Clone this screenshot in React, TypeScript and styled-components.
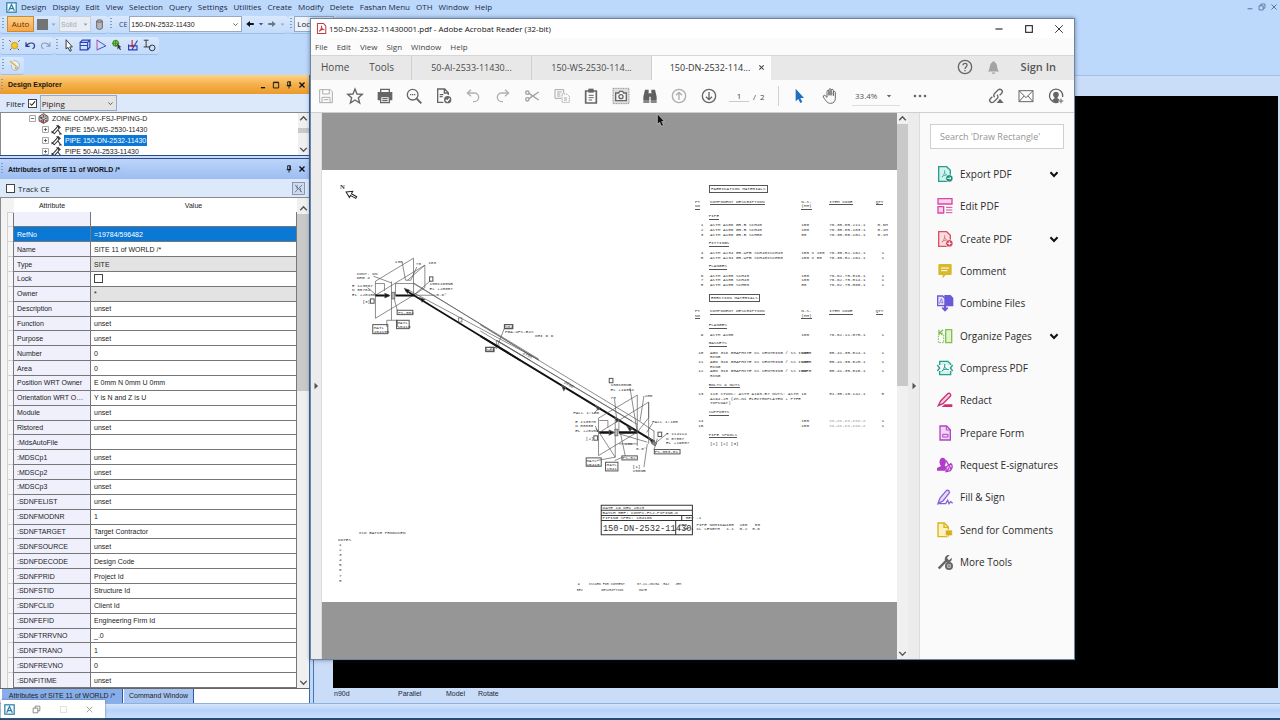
import React from "react";
import styled, { createGlobalStyle, css } from "styled-components";

const ui = `"Open Sans", "Noto Sans", sans-serif`;
const sans = `"Liberation Sans", Arial, sans-serif`;
const mono = `"Liberation Mono", "Courier New", monospace`;

const GlobalStyle = createGlobalStyle`
  * { box-sizing: border-box; }
  html, body, #root { height: 100%; margin: 0; }
  body { overflow: hidden; font-family: ${sans}; font-size: 7px; color: #222; }
  button, input, select { font: inherit; color: inherit; margin: 0; padding: 0; border: 0; background: none; border-radius: 0; }
  svg { display: block; flex: none; }
  ul { margin: 0; padding: 0; list-style: none; }
`;

/* ---------- Host application frame ---------- */

const Desktop = styled.div`
  position: relative;
  display: flex;
  flex-direction: column;
  height: 100vh;
  overflow: hidden;
  background: #bcd8fb;
`;

const MenuBar = styled.nav`
  display: flex;
  align-items: center;
  gap: 4px;
  height: 14px;
  padding-left: 6px;
  font-family: ${ui};
  font-size: 8px;
  color: #1d2b45;
`;

const MenuItems = styled.div<{ $gap: number }>`
  display: flex;
  flex: 1;
  gap: ${(p) => p.$gap}px;
`;

const MenuItem = styled.button`
  white-space: nowrap;
  line-height: 12px;
`;

const FrameButtons = styled.div`
  display: flex;
  gap: 4px;
  padding-right: 2px;
  color: #4b6591;
`;

const ToolRow = styled.div<{ $height: number }>`
  display: flex;
  align-items: center;
  height: ${(p) => p.$height}px;
`;

const Strip = styled.div<{ $gap: number }>`
  display: flex;
  align-items: center;
  gap: ${(p) => p.$gap}px;
  height: 18px;
  padding: 0 3px 0 2px;
  border-radius: 3px;
  border-bottom: 1px solid #9dbfea;
  background: linear-gradient(#d9e8fc, #c3dbfb);
`;

const Grip = styled.span`
  width: 2px;
  height: 12px;
  background: repeating-linear-gradient(#7c9cc9 0 1px, transparent 1px 3px);
`;

const IconButton = styled.button`
  display: grid;
  place-items: center;
`;

const AutoButton = styled.button`
  width: 27px;
  height: 16px;
  border: 1px solid #c98b34;
  background: linear-gradient(#fdd08a, #fba545);
  font-family: ${ui};
  font-size: 8px;
  line-height: 14px;
  color: #5a3606;
`;

const Swatch = styled.button`
  width: 11px;
  height: 11px;
  background: #747474;
`;

const SelectBox = styled.div<{ $width: number; $muted?: boolean; $tone?: string }>`
  display: flex;
  align-items: center;
  width: ${(p) => p.$width}px;
  height: 16px;
  padding: 0 2px 0 1px;
  border: 1px solid ${(p) => (p.$muted ? "#c7cfda" : "#98a9c2")};
  background: ${(p) => p.$tone ?? "#fff"};
  color: ${(p) => (p.$muted ? "#a8a8a8" : "#222")};
  select { flex: 1; min-width: 0; appearance: none; outline: 0; }
`;

const CeLabel = styled.label`
  padding-left: 5px;
  font-family: ${ui};
  font-size: 7px;
  color: #2c4270;
`;

const LocButton = styled.button`
  width: 40px;
  height: 16px;
  padding-left: 2px;
  border: 1px solid #98a9c2;
  background: #eef4fd;
  text-align: left;
  font-family: ${ui};
  font-size: 8px;
  line-height: 14px;
`;

const Workspace = styled.div`
  display: flex;
  flex: 1;
  min-height: 0;
`;

const Dock = styled.aside`
  display: flex;
  flex-direction: column;
  width: 310px;
  flex: none;
  border-right: 1px solid #45669c;
  background: #dbe9fb;
`;

const PaneHeader = styled.header<{ $active?: boolean }>`
  display: flex;
  align-items: center;
  gap: 5px;
  height: ${(p) => (p.$active ? 19 : 20)}px;
  flex: none;
  padding: 0 3px 0 1px;
  background: ${(p) =>
    p.$active ? "linear-gradient(#fdd386, #f5b04a 50%, #eb9a2a)" : "linear-gradient(#bdd5fa, #9cbdf1)"};
  h2 { flex: 1; margin: 0; font-size: 7px; font-weight: 700; color: #151515; }
`;

const PaneRow = styled.div`
  display: flex;
  align-items: center;
  gap: 3px;
  height: 18px;
  flex: none;
  padding: 0 4px 0 6px;
  font-family: ${ui};
  font-size: 8px;
`;

const Check = styled.input`
  appearance: none;
  width: 9px;
  height: 9px;
  border: 1px solid #444;
  background: #fff;
`;

const CheckMark = styled.span`
  display: grid;
  place-items: center;
  > * { grid-area: 1 / 1; }
  svg { pointer-events: none; visibility: hidden; }
  input:checked + svg { visibility: visible; }
`;

const Spacer = styled.span<{ $height?: number }>`
  flex: ${(p) => (p.$height ? `0 0 ${p.$height}px` : "1")};
`;

const TreePane = styled.div`
  display: flex;
  height: 43px;
  flex: none;
  overflow: hidden;
  border-top: 1px solid #8b8b8b;
  border-left: 1px solid #8b8b8b;
  background: #fff;
`;

const Tree = styled.ul`
  flex: 1;
  min-width: 0;
`;

const TreeNode = styled.li<{ $depth: number; $selected?: boolean }>`
  display: flex;
  align-items: center;
  gap: 2px;
  height: 11px;
  padding-left: ${(p) => 15 + p.$depth * 13}px;
  white-space: nowrap;
  span { padding: 0 1px; line-height: 11px; ${(p) => p.$selected && css`background: #0c78d6; color: #fff;`} }
`;

const ScrollTrack = styled.div<{ $width: number }>`
  display: flex;
  flex-direction: column;
  align-items: center;
  width: ${(p) => p.$width}px;
  flex: none;
  background: #f0f0f0;
  color: #444;
`;

const Thumb = styled.div<{ $size: number }>`
  width: 100%;
  height: ${(p) => p.$size}px;
  flex: none;
  background: #c9c9c9;
`;

const DockDivider = styled.div`
  height: 4px;
  flex: none;
  border-top: 1px solid #2c4a8c;
  border-bottom: 1px solid #2c4a8c;
  background: #c8dcf8;
`;

const GridPane = styled.div`
  display: flex;
  flex: 1;
  min-height: 0;
  overflow: hidden;
  padding-left: 6px;
  border-top: 1px solid #8b8b8b;
  border-left: 1px solid #8b8b8b;
  background: #f3f3f3;
`;

const AttributeTable = styled.table`
  flex: 1;
  width: 0;
  height: 100%;
  border-collapse: collapse;
  table-layout: fixed;
  font-size: 7px;
  line-height: 9px;
  tr { height: 14px; }
  th, td { padding: 0 3px; text-align: left; font-weight: 400; white-space: nowrap; overflow: hidden; }
  thead th { background: #fff; text-align: center; }
  thead th:first-child { background: #f3f3f3; }
`;

const AttributeRow = styled.tr<{ $state?: "selected" | "readonly" | "blank" }>`
  td:first-child { padding: 0; border-top: 1px solid #d2d2d2; border-left: 1px solid #d2d2d2; background: #f6f6f6; }
  && th, && th + td { border: 1px solid #777; }
  && th { background: #f0f0fd; text-overflow: ellipsis; }
  && th + td { background: ${(p) => (p.$state === "readonly" ? "#e3e3e3" : "#fff")}; }
  && th, && th + td {
    ${(p) => p.$state === "blank" && css`border-top: 0;`}
    ${(p) => p.$state === "selected" && css`background: #0c78d6; color: #fff;`}
  }
  input { display: block; }
`;

const DockTabs = styled.div`
  display: flex;
  gap: 1px;
  height: 15px;
  flex: none;
  padding-left: 2px;
  border-top: 1px solid #666;
  background: #fff;
`;

const DockTab = styled.button<{ $active?: boolean }>`
  padding: 0 5px;
  min-width: ${(p) => (p.$active ? 121 : 70)}px;
  border-right: 1px solid #2f57a8;
  background: ${(p) => (p.$active ? "#86aeea" : "#a9c6f3")};
  line-height: 12px;
`;

const ViewFrame = styled.main`
  display: flex;
  flex: 1;
  flex-direction: column;
  min-width: 0;
  margin-left: 3px;
  padding: 20px 2px 0 19px;
  border-left: 1px solid #4f73ad;
  border-top: 1px solid #a3bfe6;
  background: #c9dcf8;
`;

const Canvas3D = styled.div`
  flex: 1;
  background: #000;
`;

const ViewStatus = styled.div`
  display: grid;
  grid-template-columns: 64px 48px 32px 1fr;
  align-items: start;
  height: 15px;
  padding: 1px;
  flex: none;
  line-height: 9px;
  color: #1f2937;
`;

const StatusBar = styled.footer`
  height: 17px;
  flex: none;
  border-top: 1px solid #8fb0df;
  border-bottom: 2px solid #27496f;
  background: linear-gradient(#d4e5fc, #b7d2f8 45%, #c9defb);
`;

const MinimizedWindow = styled.div`
  position: absolute;
  left: 1px;
  bottom: 2px;
  display: flex;
  align-items: center;
  justify-content: space-between;
  width: 104px;
  height: 18px;
  padding: 0 11px 0 3px;
  background: #fff;
  box-shadow: 0 0 2px #5b6f8c;
  color: #777;
`;

/* ---------- PDF reader window ---------- */

const ReaderWindow = styled.section`
  position: absolute;
  left: 310px;
  right: 205px;
  top: 18px;
  bottom: 60px;
  display: flex;
  flex-direction: column;
  border: 1px solid #6d84a3;
  background: #fff;
  font-family: ${ui};
  box-shadow: 0 0 4px rgba(20, 40, 80, 0.5);
`;

const TitleBar = styled.header`
  display: flex;
  align-items: center;
  gap: 2px;
  height: 19px;
  flex: none;
  padding: 0 9px 0 5px;
  color: #111;
  h1 { flex: 1; margin: 0; font-size: 8px; font-weight: 400; }
`;

const CaptionButtons = styled.div`
  display: flex;
  gap: 18px;
  color: #222;
`;

const ReaderMenu = styled.nav`
  display: flex;
  align-items: center;
  height: 17px;
  flex: none;
  padding-left: 4px;
  background: #fbfbfb;
  font-size: 8px;
  color: #444;
`;

const TabBar = styled.div`
  display: flex;
  height: 25px;
  flex: none;
  border-top: 1px solid #d6d6d6;
  background: #e8e8e8;
  color: #4a4a4a;
`;

const HomeTabs = styled.div`
  display: flex;
  width: 100px;
  gap: 20px;
  padding: 0 0 2px 10px;
  font-size: 10px;
`;

const FileTab = styled.button<{ $active?: boolean }>`
  display: flex;
  align-items: center;
  justify-content: center;
  gap: ${(p) => (p.$active ? 8 : 0)}px;
  width: 120px;
  padding: 0 0 2px ${(p) => (p.$active ? 12 : 0)}px;
  border-left: 1px solid #cfcfcf;
  background: ${(p) => (p.$active ? "#fcfcfc" : "#e8e8e8")};
  font-size: 9px;
  color: ${(p) => (p.$active ? "#333" : "#4a4a4a")};
`;

const Account = styled.div`
  display: flex;
  align-items: center;
  gap: 11px;
  margin-left: auto;
  padding: 0 18px 2px 0;
  button:last-child { padding-left: 8px; font-size: 11px; font-weight: 600; line-height: 16px; color: #555; }
`;

const Toolbar = styled.div`
  display: flex;
  align-items: center;
  height: 33px;
  flex: none;
  padding: 0 6px 0 3px;
  border-bottom: 1px solid #cfcfcf;
  background: #fbfbfb;
`;

const ToolGroup = styled.div<{ $width: number }>`
  display: flex;
  justify-content: space-between;
  width: ${(p) => p.$width}px;
`;

const ToolButton = styled.button`
  display: grid;
  place-items: center;
  width: 24px;
  height: 24px;
`;

const PageField = styled.label`
  display: flex;
  align-items: center;
  gap: 4px;
  width: 50px;
  height: 20px;
  margin-left: 8px;
  border-right: 1px solid #d2d2d2;
  font-size: 8px;
  color: #444;
  white-space: nowrap;
  input { width: 20px; border-bottom: 1px solid #ccc; text-align: center; outline: 0; }
`;

const ZoomField = styled.label`
  display: flex;
  align-items: center;
  width: 48px;
  height: 20px;
  margin: 0 8px 0 10px;
  padding: 0 8px 0 3px;
  border-bottom: 1px solid #ddd;
  font-size: 8px;
  color: #555;
  select { flex: 1; min-width: 0; appearance: none; outline: 0; }
`;

const ReaderBody = styled.div`
  display: flex;
  flex: 1;
  min-height: 0;
`;

const Flap = styled.button<{ $width: number }>`
  display: grid;
  place-items: center;
  width: ${(p) => p.$width}px;
  flex: none;
  border-right: 1px solid #dcdcdc;
  background: #ececec;
`;

const PageView = styled.div`
  display: flex;
  flex: 1;
  min-width: 0;
  overflow: hidden;
  align-items: center;
  justify-content: center;
  background: #969696;
`;

const ToolPanel = styled.aside`
  width: 154px;
  flex: none;
  padding: 11px 10px 0;
  background: #fafafa;
  overflow: hidden;
`;

const SearchInput = styled.input`
  display: block;
  width: 100%;
  height: 25px;
  margin-bottom: 16px;
  padding: 0 9px;
  border: 1px solid #cfcfcf;
  background: #fff;
  font-size: 9px;
  outline: 0;
  &::placeholder { color: #959595; opacity: 1; }
`;

const ToolList = styled.ul`
  display: flex;
  flex-direction: column;
  justify-content: space-between;
  height: 406px;
  margin-right: -3px;
`;

const ToolLink = styled.button`
  display: flex;
  align-items: center;
  gap: 6px;
  width: 100%;
  height: 18px;
  padding: 0 7px 0 6px;
  font-size: 10px;
  color: #2b2b2b;
  white-space: nowrap;
`;

const Pointer = styled.div`
  position: absolute;
  left: 655px;
  top: 113px;
`;

/* ---------- Drawing sheet, sized in page units and shown at the reader's zoom ---------- */

const Sheet = styled.article`
  zoom: 0.334;
  flex: none;
  width: 1724px;
  height: 1293px;
  background: #fff;
  font-family: ${mono};
  font-size: 13px;
  color: #333;
  text { font-family: ${mono}; font-size: 13px; fill: #333; }
`;

const SheetTop = styled.div`
  display: flex;
  height: 960px;
`;

const Materials = styled.div`
  flex: 1;
  padding: 45px 0 0 5px;
`;

const MaterialTitle = styled.h3`
  width: max-content;
  height: 24px;
  margin: 0 0 20px 50px;
  padding: 0 4px;
  border: 3px solid #555;
  font-size: 13px;
  font-weight: 400;
  line-height: 18px;
`;

const MaterialTable = styled.table`
  width: 592px;
  margin-bottom: 20px;
  border-collapse: collapse;
  table-layout: fixed;
  line-height: 14px;
  th, td { padding: 0; font-weight: 400; text-align: left; vertical-align: top; white-space: nowrap; }
  th span { border-bottom: 3px solid #555; display: inline-block; }
  thead tr { height: 28px; }
  td:first-child { padding-right: 20px; text-align: right; }
  thead th:first-child { padding-left: 9px; }
  td:nth-child(5) { text-align: center; }
`;

const GroupRow = styled.tr`
  height: 40px;
  && th { vertical-align: middle; padding-left: 50px; }
`;

/* ---------- Icons ---------- */

type IconProps = { size?: number; color?: string; fill?: string; weight?: number; children: React.ReactNode };

const Icon = ({ size = 18, color = "#666", fill = "none", weight = 3, children }: IconProps) => (
  <svg width={size} height={size} viewBox="-27 -27 54 54" fill={fill} stroke={color} strokeWidth={weight} aria-hidden="true">
    {children}
  </svg>
);

const Chevron = ({ size = 8, up, color = "#555", weight = 7 }: { size?: number; up?: boolean; color?: string; weight?: number }) => (
  <Icon size={size} color={color} weight={weight}>
    <path d={up ? "M-16 9L0 -8L16 9" : "M-16 -8L0 9L16 -8"} />
  </Icon>
);

const Caret = ({ size = 6, color = "#666" }: { size?: number; color?: string }) => (
  <Icon size={size} color="none" fill={color}>
    <path d="M-20 -10H20L0 14Z" />
  </Icon>
);

const CloseX = ({ size = 8, weight = 9, color = "#111" }: { size?: number; weight?: number; color?: string }) => (
  <Icon size={size} color={color} weight={weight}>
    <path d="M-17 -17L17 17M17 -17L-17 17" />
  </Icon>
);

const Pin = () => (
  <Icon size={8} color="#111" weight={6}>
    <path d="M-9 -22H9V4H-9ZM-16 5H16M0 5V24M6 -22V4" />
  </Icon>
);

const AppMark = ({ size = 11 }: { size?: number }) => (
  <Icon size={size} color="#2c7fa3" fill="#f4fbff" weight={6}>
    <rect x="-23" y="-23" width="46" height="46" />
    <path d="M-14 16L0 -15L14 16M-8 5H9" fill="none" />
  </Icon>
);

const docShape = "M-19 -22H5L16 -11V22H-19Z";
const pdfMark = "M-10 10C-3 4 0 -4 -1 -12M-1 -5C1 2 6 5 11 5M-9 9C-4 3 4 3 11 5";

const ToolPictures: Record<string, React.ReactNode> = {
  save: (
    <Icon color="#adadad">
      <path d="M-19 -19H13L19 -13V20H-19ZM-10 -19V-6H10V-19M-12 20V4H12V20M-7 11H7" />
    </Icon>
  ),
  star: (
    <Icon weight={4}>
      <path d="M0 -21L6 -6L22 -5L10 5L14 21L0 12L-14 21L-10 5L-22 -5L-6 -6Z" />
    </Icon>
  ),
  print: (
    <Icon weight={4}>
      <path d="M-13 -11V-20H13V-11" />
      <path d="M-20 -10H20V11H-20Z" fill="#666" />
      <path d="M-13 2H13V20H-13ZM-8 8H8M-8 14H8" fill="#fff" />
    </Icon>
  ),
  zoomOut: (
    <Icon weight={4}>
      <circle cx="-4" cy="-4" r="16" />
      <path d="M8 8L22 22" strokeWidth="6" />
      <path d="M-12 -4H5" strokeWidth="4" strokeDasharray="4 2" />
    </Icon>
  ),
  fileCheck: (
    <Icon weight={4}>
      <path d="M-2 19H-19V-21H2L13 -10V-3M1 -20V-9H13M-13 -4H-2M-13 2H-4" />
      <circle cx="11" cy="11" r="11" fill="#666" stroke="none" />
      <path d="M5 11L10 16L17 7" stroke="#fff" />
    </Icon>
  ),
  undo: (
    <Icon color="#b0b0b0" weight={4}>
      <path d="M-6 -19L-17 -9L-6 1M-17 -9H4A13 13 0 0 1 4 17H0" />
    </Icon>
  ),
  redo: (
    <Icon color="#b0b0b0" weight={4}>
      <path d="M6 -19L17 -9L6 1M17 -9H-4A13 13 0 0 0 -4 17H0" />
    </Icon>
  ),
  cut: (
    <Icon color="#a0a0a0" weight={4}>
      <circle cx="-14" cy="-10" r="5" />
      <circle cx="-14" cy="10" r="5" />
      <path d="M-9 -8L20 12M-9 8L20 -12" />
    </Icon>
  ),
  copy: (
    <Icon color="#a8a8a8" weight={3}>
      <path d="M-2 7H-21V-19H5V-8M-15 -12H-1M-15 -6H-5M-15 0H-5" />
      <path d="M0 -6H15L22 1V19H0Z" strokeDasharray="4 2" />
      <path d="M6 6H15M6 12H15" />
    </Icon>
  ),
  paste: (
    <Icon weight={5}>
      <path d="M-16 -15H16V21H-16Z" />
      <path d="M-8 -22H8V-10H-8Z" fill="#666" stroke="none" />
      <path d="M-7 -2H8M-7 5H8M-7 12H3" strokeWidth="3" />
    </Icon>
  ),
  snapshot: (
    <Icon weight={4}>
      <rect x="-24" y="-23" width="48" height="46" fill="#dedede" strokeWidth="2" strokeDasharray="3 2" />
      <path d="M-16 -9H-7L-4 -14H5L8 -9H16V14H-16Z" fill="#f6f6f6" />
      <circle cx="0" cy="2" r="6" />
    </Icon>
  ),
  find: (
    <Icon color="none" fill="#606060">
      <path d="M-15 -19H-4V-7H-2V14H-20V2ZM15 -19H4V-7H2V14H20V2Z" />
      <path d="M-20 16H-2V20H-20ZM2 16H20V20H2ZM-3 -8H3V2H-3Z" />
    </Icon>
  ),
  pageUp: (
    <Icon color="#adadad" weight={4}>
      <circle r="20" />
      <path d="M0 12V-11M-9 -2L0 -11L9 -2" />
    </Icon>
  ),
  pageDown: (
    <Icon weight={4}>
      <circle r="20" />
      <path d="M0 -12V11M-9 2L0 11L9 2" />
    </Icon>
  ),
  select: (
    <Icon color="none" fill="#1f6fc0">
      <path d="M-10 -22V16L-2 9L4 21L10 18L4 6H15Z" />
    </Icon>
  ),
  hand: (
    <Icon>
      <path d="M-9 4V-14C-9 -18 -3 -18 -3 -14V-2V-19C-3 -23 3 -23 3 -19V-2V-17C3 -21 10 -21 10 -17V-1V-11C10 -15 16 -15 16 -11V7C16 16 10 22 2 22C-8 22 -11 16 -20 3C-22 -2 -16 -4 -13 0L-9 4Z" />
    </Icon>
  ),
  more: (
    <Icon color="none" fill="#666">
      <circle cx="-15" r="4" />
      <circle r="4" />
      <circle cx="15" r="4" />
    </Icon>
  ),
  link: (
    <Icon weight={4}>
      <path d="M-4 4C-9 -1 -6 -6 -3 -9L6 -18C14 -24 23 -15 17 -8L11 -2M3 -4C8 1 6 6 2 9L-7 18C-15 23 -23 15 -17 8L-11 2" />
      <path d="M2 21L12 8L23 21Z" fill="#666" stroke="none" />
    </Icon>
  ),
  mail: (
    <Icon>
      <path d="M-21 -16H21V17H-21ZM-21 -16L0 5L21 -16M-21 17L-6 0M21 17L6 0" />
    </Icon>
  ),
  addUser: (
    <Icon weight={4}>
      <path d="M8 18A20 20 0 1 1 20 3" />
      <path d="M-12 14C-10 8 -4 9 -4 5C-12 -2 -9 -13 0 -13C9 -13 12 -2 4 5C4 8 8 8 10 10L6 19H-4Z" fill="#666" stroke="none" />
      <path d="M15 8V22M8 15H22" strokeWidth="3" />
    </Icon>
  ),
  help: (
    <Icon size={18} weight={4}>
      <circle r="20" />
      <path d="M-6 -5C-6 -13 7 -13 6 -5C6 0 0 0 0 6M0 9V13" strokeWidth="4" />
    </Icon>
  ),
  bell: (
    <Icon size={17} color="none" fill="#a3a3a3">
      <path d="M-18 13C-10 7 -14 -13 -4 -16A4 4 0 0 1 4 -16C14 -13 10 7 18 13ZM-6 16H6C5 22 -5 22 -6 16Z" />
    </Icon>
  ),
};

const PanelPictures: Record<string, React.ReactNode> = {
  export: (
    <Icon color="#23a08c" fill="#d3f1ee" weight={4}>
      <path d={docShape} />
      <path d={pdfMark} fill="none" strokeWidth="2" />
      <circle cx="13" cy="13" r="11" fill="#168c78" stroke="#fafafa" strokeWidth="2" />
      <path d="M7 13H18M14 9L18 13L14 17" fill="none" stroke="#fff" strokeWidth="3" />
    </Icon>
  ),
  edit: (
    <Icon color="#d84aa5" fill="#fbd3ea" weight={4}>
      <path d="M-21 -22H21V-6H-21ZM-21 2H-4V21H-21Z" />
      <path d="M3 4H22M3 12H22M3 20H22" strokeWidth="3" />
    </Icon>
  ),
  create: (
    <Icon color="#d9515f" fill="#fbdde0" weight={4}>
      <path d={docShape} />
      <path d={pdfMark} fill="none" strokeWidth="2" />
      <circle cx="13" cy="13" r="11" fill="#cf3f51" stroke="#fafafa" strokeWidth="2" />
      <path d="M7 13H19M13 7V19" stroke="#fff" strokeWidth="3" />
    </Icon>
  ),
  comment: (
    <Icon color="none" fill="#d8b82c">
      <path d="M-17 -21H17Q20 -21 20 -18V9Q20 12 17 12H2L-7 22V12H-17Q-20 12 -20 9V-18Q-20 -21 -17 -21Z" />
      <path d="M-12 -9H12M-12 -1H7" stroke="#fff" strokeWidth="3" />
    </Icon>
  ),
  combine: (
    <Icon color="#6a5ad8" fill="#e3e0fb" weight={4}>
      <path d="M0 -22H16L23 -14V8H0Z" fill="#6a5ad8" />
      <path d="M-22 -21H-7L0 -14V8H-22Z" />
      <path d="M-17 2L-11 -13L-6 0L-14 -2" fill="none" strokeWidth="2" />
      <path d="M0 5V20M-8 14L0 22L8 14" fill="none" strokeWidth="6" />
    </Icon>
  ),
  organize: (
    <Icon color="#82c14c" fill="#dff3cf" weight={4}>
      <path d="M2 -19H20V20H2Z" />
      <path d="M-20 -4H-4V20H-20Z" strokeDasharray="5 3" strokeWidth="3" fill="none" />
      <path d="M-6 -19L-16 -9M-18 -19V-8H-7" fill="none" />
    </Icon>
  ),
  compress: (
    <Icon color="#23a08c" fill="#d3f1ee" weight={4}>
      <path d="M-16 -9V-20H9L17 -12V-9M17 9V20H-16V9" />
      <path d={pdfMark} fill="none" strokeWidth="3" />
      <path d="M-23 -9L-16 0L-23 9M23 -9L16 0L23 9" fill="none" />
    </Icon>
  ),
  redact: (
    <Icon color="#c9336f" fill="#f8cfe0" weight={4}>
      <path d="M-20 17L-13 3L8 -19C14 -23 20 -16 16 -11L-6 11Z" />
      <path d="M-1 13H22V21H-10Z" fill="#c9336f" stroke="none" />
    </Icon>
  ),
  form: (
    <Icon color="#b046c4" fill="#f0d3f6" weight={4}>
      <path d="M-15 -21H5L16 -10V21H-15Z" />
      <path d="M-7 4H9V12H-7ZM4 -20V-9H15" fill="none" strokeWidth="3" />
    </Icon>
  ),
  request: (
    <Icon color="none" fill="#b03cc8">
      <path d="M-24 17V9L-12 3C-20 -8 -16 -22 -7 -22C3 -22 6 -8 -1 2L4 6L0 17Z" />
      <path d="M3 6L18 -4C24 1 22 10 16 17L3 20Z" fill="#f0d3f6" stroke="#b03cc8" strokeWidth="4" />
      <path d="M3 -14L18 12M5 20L12 8" stroke="#b03cc8" strokeWidth="4" />
    </Icon>
  ),
  sign: (
    <Icon color="#8463d6" fill="#e5dcfa" weight={4}>
      <path d="M-21 20L-15 3L4 -19C10 -23 16 -16 12 -11L-6 12Z" />
      <path d="M-21 20H2L8 10L12 20L17 14L23 19" fill="none" />
    </Icon>
  ),
  send: (
    <Icon color="#dbb31b" fill="#fbf2bd" weight={4}>
      <path d="M-21 -21H-2L10 -9V20H-21Z" />
      <path d="M-3 -21V-8H10" fill="none" />
      <path d="M1 0H22V17H12L8 22V17H1Z" fill="#d9ad16" stroke="#fafafa" strokeWidth="2" />
    </Icon>
  ),
  tools: (
    <Icon color="none" fill="#666">
      <path d="M-22 17L0 -5C-3 -14 4 -23 14 -21L6 -12L12 -5L20 -13C22 -5 16 2 8 2L4 1L-16 22Z" />
      <circle cx="12" cy="12" r="9" fill="#fafafa" stroke="#666" strokeWidth="6" />
      <path d="M7 12H17M12 7V17" stroke="#666" strokeWidth="3" />
    </Icon>
  ),
};

/* ---------- Data ---------- */

const appMenus = ["Design", "Display", "Edit", "View", "Selection", "Query", "Settings", "Utilities", "Create", "Modify", "Delete", "Fashan Menu", "OTH", "Window", "Help"];
const readerMenus = ["File", "Edit", "View", "Sign", "Window", "Help"];

type Attribute = { name: string; value: string; state?: "selected" | "readonly" | "blank"; check?: boolean };
const attributes: Attribute[] = [
  { name: "", value: "", state: "blank" },
  { name: "RefNo", value: "=19784/596482", state: "selected" },
  { name: "Name", value: "SITE 11 of WORLD /*" },
  { name: "Type", value: "SITE", state: "readonly" },
  { name: "Lock", value: "", check: true },
  { name: "Owner", value: "*", state: "readonly" },
  { name: "Description", value: "unset" },
  { name: "Function", value: "unset" },
  { name: "Purpose", value: "unset" },
  { name: "Number", value: "0" },
  { name: "Area", value: "0" },
  { name: "Position WRT Owner", value: "E 0mm N 0mm U 0mm" },
  { name: "Orientation WRT O…", value: "Y is N and Z is U" },
  { name: "Module", value: "unset" },
  { name: "Rlstored", value: "unset" },
  { name: ":MdsAutoFile", value: "" },
  { name: ":MDSCp1", value: "unset" },
  { name: ":MDSCp2", value: "unset" },
  { name: ":MDSCp3", value: "unset" },
  { name: ":SDNFELIST", value: "unset" },
  { name: ":SDNFMODNR", value: "1" },
  { name: ":SDNFTARGET", value: "Target Contractor" },
  { name: ":SDNFSOURCE", value: "unset" },
  { name: ":SDNFDECODE", value: "Design Code" },
  { name: ":SDNFPRID", value: "Project Id" },
  { name: ":SDNFSTID", value: "Structure Id" },
  { name: ":SDNFCLID", value: "Client Id" },
  { name: ":SDNFEFID", value: "Engineering Firm Id" },
  { name: ":SDNFTRRVNO", value: "_.0" },
  { name: ":SDNFTRANO", value: "1" },
  { name: ":SDNFREVNO", value: "0" },
  { name: ":SDNFITIME", value: "unset" },
];

const panelTools = [
  ["export", "Export PDF", true],
  ["edit", "Edit PDF", false],
  ["create", "Create PDF", true],
  ["comment", "Comment", false],
  ["combine", "Combine Files", false],
  ["organize", "Organize Pages", true],
  ["compress", "Compress PDF", false],
  ["redact", "Redact", false],
  ["form", "Prepare Form", false],
  ["request", "Request E-signatures", false],
  ["sign", "Fill & Sign", false],
  ["send", "Send for Comments", false],
  ["tools", "More Tools", false],
] as const;

type Line = [string, string, string, string, string];
type Group = { title: string; lines: Line[] };
const fabrication: Group[] = [
  { title: "PIPE", lines: [
    ["1", "ASTM A106 GR.B SCH40", "150", "76.30.05.211.1", "0.6M"],
    ["2", "ASTM A106 GR.B SCH40", "100", "76.30.05.163.1", "0.1M"],
    ["3", "ASTM A106 GR.B SCH80", "80", "76.30.05.102.1", "0.1M"],
  ] },
  { title: "FITTINGS", lines: [
    ["4", "ASTM A234 GR.WPB SCH40xSCH40", "150 x 100", "76.30.52.162.1", "1"],
    ["5", "ASTM A234 GR.WPB SCH40xSCH80", "150 x 80", "76.30.52.161.1", "1"],
  ] },
  { title: "FLANGES", lines: [
    ["6", "ASTM A105 SCH40", "150", "76.62.75.516.1", "1"],
    ["7", "ASTM A105 SCH40", "100", "76.62.75.514.1", "1"],
    ["8", "ASTM A105 SCH80", "80", "76.62.75.560.1", "1"],
  ] },
];
const erection: Group[] = [
  { title: "FLANGES", lines: [["9", "ASTM A105", "150", "76.62.11.075.1", "1"]] },
  { title: "GASKETS", lines: [
    ["10", "AGD 316 GRAPHITE CS CENTRING / SS INNER\nRING", "150", "85.41.35.524.1", "1"],
    ["11", "AGD 316 GRAPHITE CS CENTRING / SS INNER\nRING", "100", "85.41.35.520.1", "1"],
    ["12", "AGD 316 GRAPHITE CS CENTRING / SS INNER\nRING", "80", "85.41.35.518.1", "1"],
  ] },
  { title: "BOLTS & NUTS", lines: [
    ["13", "110 STUDS: ASTM A193-B7 NUTS: ASTM\nA194-2H (Zn-Ni ELECTROPLATED + PTFE\nTOPCOAT)", "16", "81.38.10.142.1", "8"],
  ] },
  { title: "SUPPORTS", lines: [
    ["14", "", "150", "##.##.##.###.#", "1"],
    ["15", "", "150", "##.##.##.###.#", "1"],
  ] },
  { title: "PIPE SPOOLS", lines: [] },
];

/* ---------- Drawing sheet parts ---------- */

const MaterialList = ({ title, groups, footer }: { title: string; groups: Group[]; footer?: string }) => (
  <>
    <MaterialTitle>{title}</MaterialTitle>
    <MaterialTable>
      <colgroup>
        <col width="54" />
        <col width="273" />
        <col width="84" />
        <col width="139" />
        <col width="42" />
      </colgroup>
      <thead>
        <tr>
          <th><span>PT<br />NO</span></th>
          <th><span>COMPONENT DESCRIPTION</span></th>
          <th><span>N.S.<br />(MM)</span></th>
          <th><span>ITEM CODE</span></th>
          <th><span>QTY</span></th>
        </tr>
      </thead>
      <tbody>
        {groups.map((g) => (
          <React.Fragment key={g.title}>
            <GroupRow>
              <th colSpan={5}><span>{g.title}</span></th>
            </GroupRow>
            {g.lines.map((l) => (
              <tr key={l[0]}>
                {l.map((cell, i) => (
                  <td key={i}>
                    {cell.split("\n").map((t, k) => (
                      <React.Fragment key={k}>{k > 0 && <br />}{t}</React.Fragment>
                    ))}
                  </td>
                ))}
              </tr>
            ))}
          </React.Fragment>
        ))}
        {footer && (
          <tr>
            <td />
            <td colSpan={4}>{footer}</td>
          </tr>
        )}
      </tbody>
    </MaterialTable>
  </>
);

const Isometric = () => (
  <svg width="1104" height="960" viewBox="0 0 1104 960" fill="none" stroke="#555" strokeWidth="2">
    <g transform="translate(-6 0)">
      <text x="60" y="56" fontWeight="700" style={{ fontSize: 20, fontFamily: "Liberation Serif, serif" }} stroke="none">N</text>
      <path d="M78 66L98 64L94 71L110 80L107 85L91 76L88 82Z" stroke="#222" strokeWidth="3" />
      <path d="M166 444V333L280 264V375L166 444M166 375L314 285V352L280 375M193 340V362M166 340H193M280 375H346M226 340V375M226 340H280M256 330L246 276M256 330L272 330L290 290M160 318L214 338M214 334V450M200 470V450H232V470M220 378L232 422M280 375L330 332M142 352L166 372M262 330L314 285" />
      <path d="M262 358L655 568M280 340L655 566M530 510L630 570" strokeWidth="2" />
      <path d="M280 338L655 570" />
      <path d="M166 376H206M226 376H282" stroke="#111" strokeWidth="6" />
      <path d="M256 360L600 570" stroke="#111" strokeWidth="5" />
      <path d="M194 369L210 376L194 383ZM252 354L268 360L262 370ZM298 382L314 388L306 396Z" fill="#111" />
      <rect x="215" y="366" width="9" height="20" fill="#bbb" />
      <path d="M528 510V536M522 532L538 524M530 530L552 474M510 534L528 530" />
      <rect x="328" y="320" width="10" height="13" strokeWidth="3" />
      <rect x="151" y="386" width="11" height="13" strokeWidth="3" />
      <rect x="415" y="443" width="10" height="12" />
      <rect x="231" y="420" width="47" height="13" strokeWidth="3" />
      <rect x="158" y="463" width="45" height="27" strokeWidth="3" />
      <rect x="229" y="450" width="38" height="25" strokeWidth="3" />
      <rect x="553" y="463" width="24" height="12" strokeWidth="3" />
      <rect x="497" y="531" width="24" height="13" strokeWidth="3" />
      <g stroke="none">
        <text x="224" y="277">130</text>
        <text x="287" y="283">70</text>
        <text x="324" y="280">103</text>
        <text x="110" y="313">CONT. ON</text>
        <text x="110" y="326">DRG 4</text>
        <text x="96" y="350">E 113867</text>
        <text x="96" y="363">N 88784</text>
        <text x="96" y="376">EL +20158</text>
        <text x="127" y="398">[3]</text>
        <text x="328" y="345">100x100NB</text>
        <text x="328" y="358">EL +20087</text>
        <text x="348" y="376">0.6°</text>
        <text x="234" y="431">PS-001</text>
        <text x="161" y="476">MATL</text>
        <text x="161" y="488">154106</text>
        <text x="232" y="462">MATL</text>
        <text x="232" y="473">15410</text>
        <text x="554" y="474">S02</text>
        <text x="499" y="542">S01</text>
        <text x="554" y="487">PGA-UPS-B1S</text>
        <text x="644" y="500">ORI = D</text>
      </g>
    </g>
    <g transform="translate(474 390)">
      <path d="M0 74L470 358L520 392M48 120L455 362M0 92L470 372" />
      <path d="M0 107L522 424" stroke="#111" strokeWidth="6" />
      <path d="M356 396H398M415 396H470" stroke="#111" strokeWidth="7" />
      <path d="M244 256L256 262L250 270ZM346 316L358 322L352 328ZM440 378L454 384L448 392ZM386 389L401 396L386 403ZM505 412L520 421L514 428ZM404 352L416 358L408 364Z" fill="#111" strokeWidth="3" />
      <path d="M354 465V353L470 284V395L354 465M356 396L504 305V352L470 395M382 360V382M356 360H382M404 356V470M415 358V396M356 396L404 470M416 400L500 425M448 262L470 395M402 296L408 356M340 340L354 322M504 305V430M520 390V434M490 286L478 362M516 368L498 396M348 480L404 470M402 480L426 470M420 400L434 466M415 430H470M470 395V436M556 402L524 428M530 414L520 448M500 430L490 500M346 384L354 396M344 376L354 396" />
      <rect x="403" y="386" width="9" height="20" fill="#bbb" />
      <path d="M516 420L528 428L524 436L514 430Z" fill="#888" />
      <rect x="72" y="73" width="25" height="12" strokeWidth="3" />
      <rect x="16" y="141" width="24" height="12" strokeWidth="3" />
      <rect x="386" y="234" width="11" height="13" strokeWidth="3" />
      <rect x="340" y="406" width="11" height="13" strokeWidth="3" />
      <rect x="532" y="395" width="11" height="13" strokeWidth="3" />
      <rect x="317" y="472" width="45" height="25" strokeWidth="3" />
      <rect x="375" y="485" width="37" height="26" strokeWidth="3" />
      <rect x="424" y="466" width="46" height="12" strokeWidth="3" />
      <rect x="521" y="447" width="77" height="13" strokeWidth="3" />
      <g stroke="none">
        <text x="126" y="160" transform="rotate(30 126 160)">2785</text>
        <text x="250" y="248" transform="rotate(30 250 248)">2680</text>
        <text x="390" y="257">150x80NB</text>
        <text x="390" y="272">EL +19864</text>
        <text x="390" y="297">70</text>
        <text x="278" y="340">FALL 1:100</text>
        <text x="284" y="368">E 113870</text>
        <text x="284" y="381">N 88088</text>
        <text x="284" y="394">EL +20159</text>
        <text x="316" y="418">[2]</text>
        <text x="492" y="290">200</text>
        <text x="514" y="368">FALL 1:100</text>
        <text x="556" y="404">E 114114</text>
        <text x="556" y="417">N 87857</text>
        <text x="556" y="430">EL +19887</text>
        <text x="318" y="484">MATL</text>
        <text x="318" y="495">15410</text>
        <text x="378" y="497">MATL</text>
        <text x="378" y="508">1541</text>
        <text x="426" y="476">PS-02</text>
        <text x="522" y="458">PS-003-01</text>
        <text x="432" y="432">130</text>
        <text x="466" y="447">0.6°</text>
        <text x="456" y="503">[1]</text>
        <text x="456" y="515">150NB</text>
      </g>
    </g>
  </svg>
);

const TitleStrip = () => (
  <svg width="1724" height="333" viewBox="0 0 1724 333" fill="none" stroke="#333" strokeWidth="3">
    <g transform="translate(-6 0)">
      <path d="M842 43H1115V131H842ZM842 58H1115M842 73H1115M842 88H1115M1083 73V88M1065 88V131" />
      <g stroke="none">
        <text x="116" y="129">ISO BATCH PRODUCED</text>
        <text x="54" y="150">NOTES</text>
        {[1, 2, 3, 4, 5, 6, 7, 8].map((n) => (
          <text key={n} x="57" y={151 + n * 15}>{n}</text>
        ))}
        <text x="846" y="55">DATE 19 DEC 2023</text>
        <text x="846" y="70">BATCH REF: COMPX-FSJ-PIPING-D</text>
        <text x="846" y="85">PIPING SPEC: 154106</text>
        <text x="1095" y="85">REV -1</text>
        <text x="847" y="119" style={{ fontSize: 26 }}>150-DN-2532-11430</text>
        <text x="1075" y="104">DRG</text>
        <text x="1072" y="118">1 OF 1</text>
        <text x="1127" y="104">PIPE NOMINAL</text>
        <text x="1216" y="104">150</text>
        <text x="1256" y="104">100</text>
        <text x="1302" y="104">80</text>
        <text x="1127" y="116">CL LENGTH</text>
        <text x="1216" y="116">1.1</text>
        <text x="1256" y="116">0.2</text>
        <text x="1294" y="116">0.6</text>
        <text x="772" y="280" style={{ fontSize: 10 }}>A</text>
        <text x="805" y="280" style={{ fontSize: 10 }}>ISSUED FOR COMMENT</text>
        <text x="949" y="280" style={{ fontSize: 10 }}>07-11-2023A</text>
        <text x="1028" y="280" style={{ fontSize: 10 }}>RAJ</text>
        <text x="1064" y="280" style={{ fontSize: 10 }}>JEM</text>
        <text x="769" y="299" style={{ fontSize: 10 }}>REV</text>
        <text x="842" y="299" style={{ fontSize: 10 }}>DESCRIPTION</text>
        <text x="955" y="299" style={{ fontSize: 10 }}>DATE</text>
      </g>
    </g>
  </svg>
);

/* ---------- Tree icons ---------- */

const Expander = ({ open }: { open?: boolean }) => (
  <Icon size={7} color="#8a8a8a" fill="#fff" weight={6}>
    <rect x="-22" y="-22" width="44" height="44" />
    <path d={open ? "M-12 0H12" : "M-12 0H12M0 -12V12"} stroke="#444" />
  </Icon>
);

const PipeIcon = () => (
  <Icon size={11} color="#333" weight={5}>
    <path d="M-24 18L2 -10M-12 22L10 -2M-24 8L-10 22M0 -20L14 -6M0 -10L8 -20L18 -10L8 -2M8 4L20 20M12 22H26" />
  </Icon>
);

const ZoneIcon = () => (
  <Icon size={11} color="#333" weight={4}>
    <path d="M0 -24L22 -10V12L0 24L-22 12V-10Z" fill="#cfd8dc" />
    <path d="M-18 -4L0 6L18 -4M0 6V22" />
    <path d="M-14 8L-4 16M8 14L16 8M0 -18V-4" stroke="#c33" strokeWidth="8" />
    <path d="M-16 -8L-6 -2" stroke="#258" strokeWidth="6" />
    <path d="M8 -12L14 -6" stroke="#2a7" strokeWidth="6" />
  </Icon>
);

/* ---------- Reader window ---------- */

const Tool = ({ name, label }: { name: string; label: string }) => (
  <ToolButton type="button" aria-label={label}>{ToolPictures[name]}</ToolButton>
);

const Reader = () => (
  <ReaderWindow>
    <TitleBar>
      <Icon size={11} color="#c33d3d" fill="#fff" weight={5}>
        <path d="M-20 -24H10L21 -13V24H-20Z" />
        <path d="M-12 14C-2 6 2 -4 0 -14C0 0 6 6 14 6C6 3 -4 5 -12 14Z" />
      </Icon>
      <h1>150-DN-2532-11430001.pdf - Adobe Acrobat Reader (32-bit)</h1>
      <CaptionButtons>
        <IconButton type="button" aria-label="Minimize">
          <Icon size={12} color="#222" weight={5}><path d="M-16 0H16" /></Icon>
        </IconButton>
        <IconButton type="button" aria-label="Maximize">
          <Icon size={12} color="#222" weight={5}><rect x="-15" y="-15" width="30" height="30" /></Icon>
        </IconButton>
        <IconButton type="button" aria-label="Close">
          <CloseX size={12} weight={4} color="#222" />
        </IconButton>
      </CaptionButtons>
    </TitleBar>
    <ReaderMenu>
      <MenuItems $gap={9}>
        {readerMenus.map((m) => <MenuItem key={m} type="button">{m}</MenuItem>)}
      </MenuItems>
    </ReaderMenu>
    <TabBar>
      <HomeTabs>
        <button type="button">Home</button>
        <button type="button">Tools</button>
      </HomeTabs>
      <FileTab type="button">50-AI-2533-11430...</FileTab>
      <FileTab type="button">150-WS-2530-114...</FileTab>
      <FileTab type="button" $active>
        150-DN-2532-114...
        <CloseX size={7} weight={8} color="#444" />
      </FileTab>
      <Account>
        <IconButton type="button" aria-label="Help">{ToolPictures.help}</IconButton>
        <IconButton type="button" aria-label="Notifications">{ToolPictures.bell}</IconButton>
        <button type="button">Sign In</button>
      </Account>
    </TabBar>
    <Toolbar>
      <ToolGroup $width={407}>
        <Tool name="save" label="Save" />
        <Tool name="star" label="Star" />
        <Tool name="print" label="Print" />
        <Tool name="zoomOut" label="Zoom out" />
        <Tool name="fileCheck" label="Check file" />
        <Tool name="undo" label="Undo" />
        <Tool name="redo" label="Redo" />
        <Tool name="cut" label="Cut" />
        <Tool name="copy" label="Copy" />
        <Tool name="paste" label="Paste" />
        <Tool name="snapshot" label="Snapshot" />
        <Tool name="find" label="Find" />
        <Tool name="pageUp" label="Previous page" />
        <Tool name="pageDown" label="Next page" />
      </ToolGroup>
      <PageField>
        <input defaultValue="1" aria-label="Page" />
        <span>/&nbsp; 2</span>
      </PageField>
      <ToolGroup $width={63}>
        <span />
        <Tool name="select" label="Select" />
        <Tool name="hand" label="Hand" />
      </ToolGroup>
      <ZoomField>
        <select aria-label="Zoom"><option>33.4%</option></select>
        <Caret size={6} />
      </ZoomField>
      <Tool name="more" label="More" />
      <Spacer />
      <ToolGroup $width={84}>
        <Tool name="link" label="Share link" />
        <Tool name="mail" label="Mail" />
        <Tool name="addUser" label="Add people" />
      </ToolGroup>
    </Toolbar>
    <ReaderBody>
      <Flap $width={11} type="button" aria-label="Show navigation">
        <Icon size={8} color="none" fill="#555"><path d="M-10 -22V22L14 0Z" /></Icon>
      </Flap>
      <PageView>
        <Sheet>
          <SheetTop>
            <Isometric />
            <Materials>
              <MaterialList title="FABRICATION MATERIALS" groups={fabrication} />
              <MaterialList title="ERECTION MATERIALS" groups={erection} footer="[1] [2] [3]" />
            </Materials>
          </SheetTop>
          <TitleStrip />
        </Sheet>
      </PageView>
      <ScrollTrack $width={11}>
        <Chevron up size={11} />
        <Thumb $size={262} />
        <Spacer />
        <Chevron size={11} />
      </ScrollTrack>
      <Flap $width={12} type="button" aria-label="Hide tools">
        <Icon size={8} color="none" fill="#555"><path d="M-10 -22V22L14 0Z" /></Icon>
      </Flap>
      <ToolPanel>
        <SearchInput placeholder="Search 'Draw Rectangle'" aria-label="Search tools" />
        <ToolList>
          {panelTools.map(([icon, label, more]) => (
            <li key={label}>
              <ToolLink type="button">
                {PanelPictures[icon]}
                {label}
                {more && <><Spacer /><Chevron size={12} color="#111" weight={9} /></>}
              </ToolLink>
            </li>
          ))}
        </ToolList>
      </ToolPanel>
    </ReaderBody>
  </ReaderWindow>
);

/* ---------- Host toolbars ---------- */

const HostToolbars = () => (
  <>
    <ToolRow $height={21}>
      <Strip $gap={3}>
        <Grip />
        <AutoButton type="button">Auto</AutoButton>
        <Swatch type="button" aria-label="Colour" />
        <Caret size={5} color="#8aa0c4" />
        <SelectBox $width={32} $muted $tone="#e8eef6">
          <select aria-label="Display style"><option>Solid</option></select>
          <Caret size={5} color="#999" />
        </SelectBox>
        <IconButton type="button" aria-label="Cylinder">
          <Icon size={11} color="#555" fill="#b5b5b5" weight={4}>
            <path d="M-14 -17V17C-14 26 14 26 14 17V-17" />
            <ellipse cy="-17" rx="14" ry="6" />
          </Icon>
        </IconButton>
      </Strip>
      <Strip $gap={2}>
        <Grip />
        <CeLabel htmlFor="current-element">CE</CeLabel>
        <SelectBox $width={113}>
          <select id="current-element"><option>150-DN-2532-11430</option></select>
          <Chevron size={7} />
        </SelectBox>
        <IconButton type="button" aria-label="Back">
          <Icon size={12} color="none" fill="#111"><path d="M-17 0L0 -13V-5H17V5H0V13Z" /></Icon>
        </IconButton>
        <Caret size={6} color="#3b5a92" />
        <IconButton type="button" aria-label="Forward">
          <Icon size={12} color="none" fill="#6b7789"><path d="M17 0L0 -13V-5H-17V5H0V13Z" /></Icon>
        </IconButton>
        <Caret size={5} color="#93a7c8" />
      </Strip>
      <Strip $gap={2}>
        <Grip />
        <LocButton type="button">Loc</LocButton>
      </Strip>
    </ToolRow>
    <ToolRow $height={21}>
      <Strip $gap={4}>
        <Grip />
        <IconButton type="button" aria-label="Explode">
          <Icon size={13} color="#4a4a4a" weight={4}>
            <path d="M-22 -22L22 22M22 -22L-22 22" strokeDasharray="9 40 9 4" />
            <circle r="13" fill="#f2c92e" stroke="#c99a10" />
          </Icon>
        </IconButton>
        <IconButton type="button" aria-label="Undo">
          <Icon size={11} color="#28418c" weight={6}><path d="M-22 -16V4H-4M-20 2C-8 -18 20 -16 20 2C20 10 14 14 10 16" /></Icon>
        </IconButton>
        <IconButton type="button" aria-label="Redo">
          <Icon size={11} color="#8a9bb8" weight={5}><path d="M22 -16V4H4M20 2C8 -18 -20 -16 -20 2C-20 10 -14 14 -10 16" /></Icon>
        </IconButton>
      </Strip>
      <Strip $gap={4}>
        <Grip />
        <IconButton type="button" aria-label="Pointer">
          <Icon size={13} color="#333" fill="#fff" weight={4}><path d="M-10 -24V14L-2 8L6 24L12 21L5 6H16Z" /></Icon>
        </IconButton>
        <IconButton type="button" aria-label="Box">
          <Icon size={12} color="#2b3fb8" weight={5}><path d="M-22 -12H12V2H-22ZM-22 2V22H12V2M-22 -12L-12 -22H22L12 -12M22 -22V10L12 22" /></Icon>
        </IconButton>
        <IconButton type="button" aria-label="Plane">
          <Icon size={12} color="#2b3fb8" weight={4}><path d="M-18 -22L22 4L-18 22" /><path d="M-18 -24V24" stroke="#c2369f" /></Icon>
        </IconButton>
        <IconButton type="button" aria-label="Pick">
          <Icon size={12} color="#2f8f2f" weight={5}>
            <circle cx="-6" cy="-8" r="12" fill="#d4c437" />
            <path d="M-22 -8H10M-6 -24V8" />
            <path d="M2 -6V20L8 14L14 24L18 20L12 10H20Z" fill="#333" stroke="none" />
          </Icon>
        </IconButton>
        <IconButton type="button" aria-label="Connect">
          <Icon size={12} color="#2b3fb8" weight={5}><path d="M-20 -2V22H18V4H-20M-4 20L20 -20" /><path d="M-4 -22V8M-10 0L-4 8L4 0" stroke="#c2262d" /></Icon>
        </IconButton>
        <IconButton type="button" aria-label="Slope">
          <Icon size={13} color="#333" weight={4}><path d="M-24 -22H-4M-14 -22V6M-24 6H4" /><circle cx="11" cy="10" r="12" /></Icon>
        </IconButton>
      </Strip>
    </ToolRow>
    <ToolRow $height={19}>
      <Strip $gap={4}>
        <Grip />
        <IconButton type="button" aria-label="Model clock">
          <Icon size={13} color="#9aa6b5" fill="#e9edf2" weight={3}>
            <path d="M-4 -20C12 -22 22 -10 20 2C20 14 10 20 2 20C-10 20 -14 8 -12 -2" />
            <path d="M-18 -18L6 2" stroke="#d8bb3a" strokeWidth="6" />
            <circle cx="8" cy="10" r="6" fill="#e6cf5c" />
          </Icon>
        </IconButton>
      </Strip>
    </ToolRow>
  </>
);

const TickBox = ({ id, checked }: { id: string; checked?: boolean }) => (
  <CheckMark>
    <Check type="checkbox" id={id} defaultChecked={checked} />
    <Icon size={7} color="#222" weight={8}><path d="M-20 0L-6 14L20 -16" /></Icon>
  </CheckMark>
);

export default function App() {
  return (
    <Desktop>
      <GlobalStyle />
      <MenuBar>
        <AppMark />
        <MenuItems $gap={6}>
          {appMenus.map((m) => <MenuItem key={m} type="button">{m}</MenuItem>)}
        </MenuItems>
        <FrameButtons>
          <IconButton type="button" aria-label="Minimize">
            <Icon size={8} color="#4b6591" weight={6}><path d="M-16 12H16" /></Icon>
          </IconButton>
          <IconButton type="button" aria-label="Restore">
            <Icon size={8} color="#4b6591" weight={5}><path d="M-20 -8H8V20H-20ZM-8 -8V-20H20V8H8" /></Icon>
          </IconButton>
          <IconButton type="button" aria-label="Close"><CloseX size={8} weight={6} color="#4b6591" /></IconButton>
        </FrameButtons>
      </MenuBar>
      <HostToolbars />
      <Workspace>
        <Dock>
          <PaneHeader $active>
            <Grip />
            <h2>Design Explorer</h2>
            <IconButton type="button" aria-label="Minimize"><Icon size={8} color="#111" weight={9}><path d="M-14 18H14" /></Icon></IconButton>
            <IconButton type="button" aria-label="Maximize"><Icon size={8} color="#111" weight={6}><path d="M-18 -16H18V20H-18ZM-18 -19H18" /></Icon></IconButton>
            <IconButton type="button" aria-label="Pin"><Pin /></IconButton>
            <IconButton type="button" aria-label="Close"><CloseX /></IconButton>
          </PaneHeader>
          <PaneRow>
            <label htmlFor="filter-on">Filter</label>
            <TickBox id="filter-on" checked />
            <SelectBox $width={77} $tone="#e4e4e4">
              <select aria-label="Discipline"><option>Piping</option></select>
              <Chevron size={7} />
            </SelectBox>
          </PaneRow>
          <TreePane>
            <Tree>
              <TreeNode $depth={1}><Expander open /><ZoneIcon /><span>ZONE COMPX-FSJ-PIPING-D</span></TreeNode>
              <TreeNode $depth={2}><Expander /><PipeIcon /><span>PIPE 150-WS-2530-11430</span></TreeNode>
              <TreeNode $depth={2} $selected><Expander /><PipeIcon /><span>PIPE 150-DN-2532-11430</span></TreeNode>
              <TreeNode $depth={2}><Expander /><PipeIcon /><span>PIPE 50-AI-2533-11430</span></TreeNode>
            </Tree>
            <ScrollTrack $width={11}>
              <Chevron up size={11} />
              <Spacer $height={4} />
              <Thumb $size={5} />
              <Spacer />
              <Chevron size={11} />
            </ScrollTrack>
          </TreePane>
          <DockDivider />
          <PaneHeader>
            <Grip />
            <h2>Attributes of SITE 11 of WORLD /*</h2>
            <IconButton type="button" aria-label="Pin"><Pin /></IconButton>
            <IconButton type="button" aria-label="Close"><CloseX /></IconButton>
          </PaneHeader>
          <PaneRow>
            <TickBox id="track-ce" />
            <label htmlFor="track-ce">Track CE</label>
            <Spacer />
            <IconButton type="button" aria-label="Clear track">
              <Icon size={13} color="#6b7a94" fill="#cfdcf0" weight={3}>
                <rect x="-25" y="-25" width="50" height="50" />
                <path d="M-15 -15L15 16M15 -15L-15 16M-6 -14V2M8 -2V14" strokeWidth="4" />
              </Icon>
            </IconButton>
          </PaneRow>
          <GridPane>
            <AttributeTable>
              <colgroup>
                <col width="6" />
                <col width="77" />
                <col />
              </colgroup>
              <thead>
                <tr><th /><th scope="col">Attribute</th><th scope="col">Value</th></tr>
              </thead>
              <tbody>
                {attributes.map((a, i) => (
                  <AttributeRow key={i} $state={a.state}>
                    <td />
                    <th scope="row">{a.name}</th>
                    <td>{a.check ? <Check type="checkbox" aria-label={a.name} /> : a.value}</td>
                  </AttributeRow>
                ))}
              </tbody>
            </AttributeTable>
            <ScrollTrack $width={12}>
              <Spacer $height={5} />
              <Chevron up size={11} />
              <Thumb $size={177} />
              <Spacer />
              <Chevron size={11} />
            </ScrollTrack>
          </GridPane>
          <DockTabs>
            <DockTab type="button" $active>Attributes of SITE 11 of WORLD /*</DockTab>
            <DockTab type="button">Command Window</DockTab>
          </DockTabs>
        </Dock>
        <ViewFrame>
          <Canvas3D />
          <ViewStatus>
            <span>n90d</span>
            <span>Parallel</span>
            <span>Model</span>
            <span>Rotate</span>
          </ViewStatus>
        </ViewFrame>
      </Workspace>
      <StatusBar />
      <Reader />
      <MinimizedWindow>
        <AppMark />
        <IconButton type="button" aria-label="Restore">
          <Icon size={9} color="#777" weight={5}><path d="M-20 -8H8V20H-20ZM-8 -8V-20H20V8H8" /></Icon>
        </IconButton>
        <IconButton type="button" aria-label="Maximize">
          <Icon size={9} color="#ddd" weight={5}><rect x="-18" y="-18" width="36" height="36" /></Icon>
        </IconButton>
        <IconButton type="button" aria-label="Close"><CloseX size={9} weight={4} color="#777" /></IconButton>
      </MinimizedWindow>
      <Pointer>
        <Icon size={14} color="#eee" fill="#111" weight={2}>
          <path d="M-18 -24V16L-9 9L-2 24L6 20L-1 6H10Z" />
        </Icon>
      </Pointer>
    </Desktop>
  );
}
